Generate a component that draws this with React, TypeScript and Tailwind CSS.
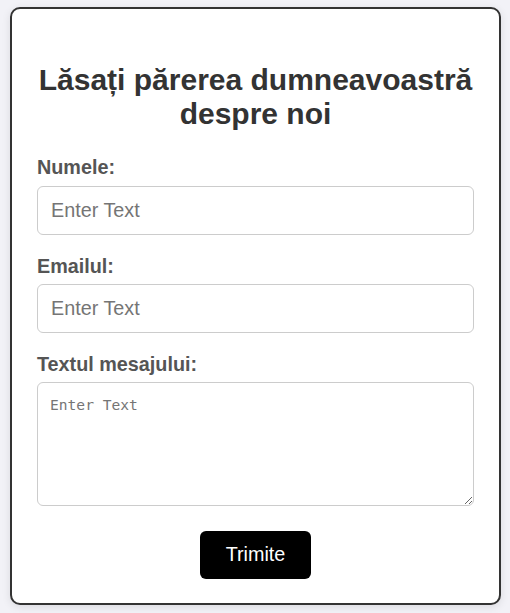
import React from "react";

export default function App() {
  return (
    <div className="min-h-[613px] bg-[#f2f2f7] pt-[7px] pl-[10px] font-['Liberation_Sans',Arial,sans-serif]">
      <div className="w-[491px] h-[598px] rounded-[10px] border-2 border-[#333] bg-white px-[25px] pt-[54px] shadow-[0_2px_8px_rgba(0,0,0,0.1)]">
        <h2 className="text-center text-[30px] font-bold leading-[34px] text-[#333]">
          Lăsați părerea dumneavoastră despre noi
        </h2>
        <form className="mt-[25px] flex flex-col" onSubmit={(e) => e.preventDefault()}>
          <label className="mb-[8px] block text-[19.8px] font-bold leading-[22px] text-[#555]">Numele:</label>
          <input
            type="text"
            placeholder="Enter Text"
            className="h-[49px] w-full rounded-[6px] border border-[#ccc] px-[13px] text-[19.8px] outline-none placeholder:text-[#757575]"
          />
          <label className="mt-[20px] mb-[7px] block text-[19.8px] font-bold leading-[22px] text-[#555]">Emailul:</label>
          <input
            type="email"
            placeholder="Enter Text"
            className="h-[49px] w-full rounded-[6px] border border-[#ccc] px-[13px] text-[19.8px] outline-none placeholder:text-[#757575]"
          />
          <label className="mt-[20px] mb-[7px] block text-[19.8px] font-bold leading-[22px] text-[#555]">Textul mesajului:</label>
          <textarea
            placeholder="Enter Text"
            className="h-[124px] w-full resize-y rounded-[6px] border border-[#ccc] px-[12px] pt-[13px] font-['DejaVu_Sans_Mono',monospace] text-[14.6px] leading-[17px] outline-none placeholder:text-[#757575]"
          />
          <div className="mt-[25px] flex justify-center">
            <button
              type="submit"
              className="h-[48px] w-[111px] rounded-[6px] bg-black text-[19.8px] text-white"
            >
              Trimite
            </button>
          </div>
        </form>
      </div>
    </div>
  );
}
